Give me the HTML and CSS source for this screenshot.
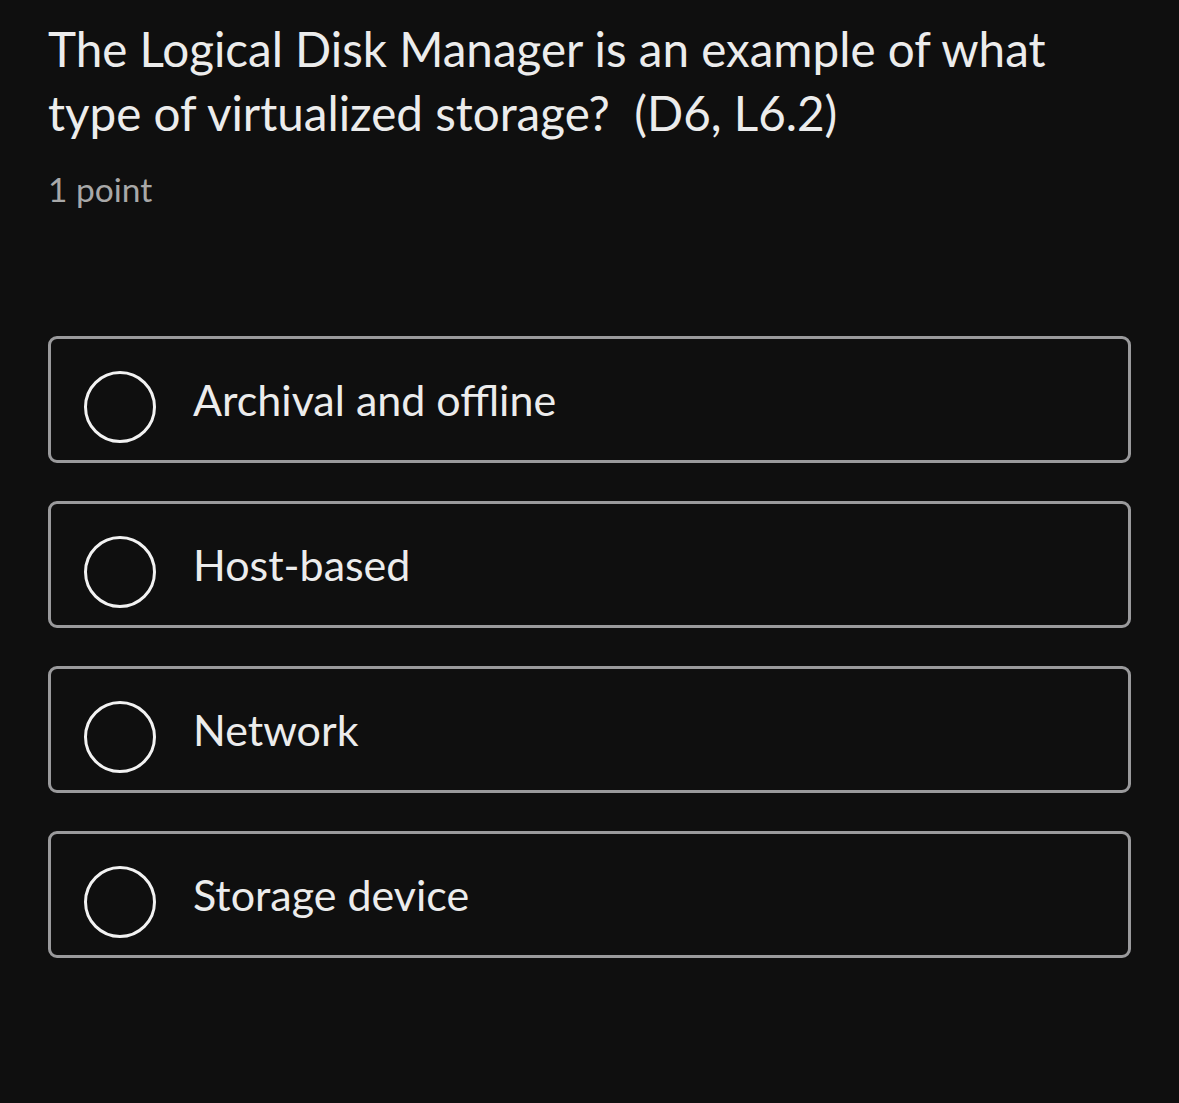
FILE: index.html
```html
<!DOCTYPE html>
<html lang="en">
<head>
  <meta charset="UTF-8">
  <title>Question</title>
  <link rel="stylesheet" href="styles.css">
</head>
<body>
  <div class="question">
    <h1 class="question-title">The Logical Disk Manager is an example of what type of virtualized storage?&nbsp; (D6, L6.2)</h1>
    <p class="points">1 point</p>

    <div class="choices">
      <label class="choice"><span class="radio"></span><span class="choice-text">Archival and offline</span></label>
      <label class="choice"><span class="radio"></span><span class="choice-text">Host-based</span></label>
      <label class="choice"><span class="radio"></span><span class="choice-text">Network</span></label>
      <label class="choice"><span class="radio"></span><span class="choice-text">Storage device</span></label>
    </div>
  </div>
</body>
</html>
```

FILE: styles.css
```css
body {
  margin: 0;
  background-color: #0f0f0f;
  font-family: Lato, "Open Sans", sans-serif;
  color: #ececec;
}
.question {
  padding: 17px 48px 0 48px;
  width: 1083px;
}
.question-title {
  margin: 0;
  font-size: 47.6px;
  font-weight: 400;
  line-height: 64px;
}
.points {
  margin: 24px 0 0 0;
  font-size: 33.5px;
  line-height: 40px;
  color: #a8a8a8;
}
.choices {
  margin-top: 127px;
  display: flex;
  flex-direction: column;
  gap: 38px;
}
.choice {
  display: flex;
  align-items: center;
  height: 127px;
  box-sizing: border-box;
  border: 3px solid #9a9a9c;
  border-radius: 9px;
  padding-left: 33px;
}
.radio {
  width: 72px;
  height: 72px;
  margin-top: 14px;
  box-sizing: border-box;
  border: 3px solid #f2f2f2;
  border-radius: 50%;
  flex-shrink: 0;
}
.choice-text {
  margin-left: 37px;
  font-size: 43px;
  color: #ececec;
}
```
